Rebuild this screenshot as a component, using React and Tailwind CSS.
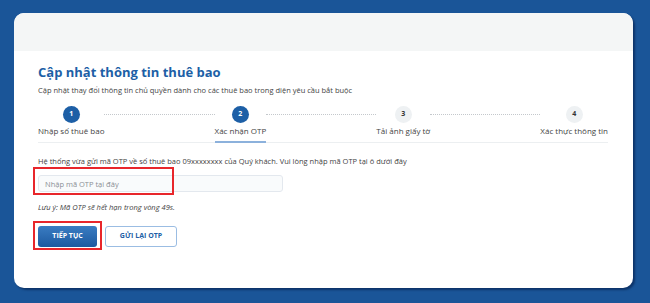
import React from 'react';

const steps = [
  { n: 1, label: 'Nhập số thuê bao', done: true },
  { n: 2, label: 'Xác nhận OTP', done: true, active: true },
  { n: 3, label: 'Tải ảnh giấy tờ' },
  { n: 4, label: 'Xác thực thông tin' },
];

const Step = ({ step }) => (
  <div className="flex flex-col items-center">
    <div
      className={
        step.done
          ? 'w-[17px] h-[17px] rounded-full bg-[#1d5fa6] text-white flex items-center justify-center text-[7px] font-bold'
          : 'w-[17px] h-[17px] rounded-full bg-[#eef1f3] text-[#333] flex items-center justify-center text-[7px] font-bold'
      }
    >
      {step.n}
    </div>
    <div className="mt-[3px] text-[8px] leading-[10px] text-[#444] whitespace-nowrap">{step.label}</div>
    <div className={step.active ? 'mt-[5px] h-[2px] w-full bg-[#8cb1dc]' : 'mt-[5px] h-[2px] w-full'} />
  </div>
);

const App = () => {
  return (
    <div
      className="w-[650px] h-[303px] bg-[#1a5598] pt-[13px] pl-[14px] overflow-hidden"
      style={{ fontFamily: '"Open Sans", "Noto Sans", sans-serif' }}
    >
      <div className="w-[619px] h-[275px] rounded-[10px] bg-white overflow-hidden shadow-[2px_2px_2px_rgba(0,20,60,0.5)]">
        {/* Top bar */}
        <div className="h-[38px] bg-[#f4f6f6]" />

        <div className="pl-[24px] pr-[25px]">
          {/* Title */}
          <h1 className="mt-[12px] text-[13px] leading-[18px] font-bold text-[#1d5fa6]">
            Cập nhật thông tin thuê bao
          </h1>
          <p className="mt-[4px] text-[7.5px] leading-[10px] text-[#444]">
            Cập nhật thay đổi thông tin chủ quyền dành cho các thuê bao trong diện yêu cầu bắt buộc
          </p>

          {/* Steps */}
          <div className="mt-[11px]">
            <div className="flex items-start">
              {steps.map((s, i) => (
                <React.Fragment key={s.n}>
                  <Step step={s} />
                  {i < steps.length - 1 && (
                    <div className="flex-1 mt-[8px] border-t border-dotted border-[#c4c8cc]" />
                  )}
                </React.Fragment>
              ))}
            </div>
            <div className="h-px bg-[#eceff1] -mt-[1px]" />
          </div>

          {/* OTP form */}
          <p className="mt-[13px] text-[7.5px] leading-[10px] text-[#444]">
            Hệ thống vừa gửi mã OTP về số thuê bao 09xxxxxxxx của Quý khách. Vui lòng nhập mã OTP tại ô dưới đây
          </p>

          <div className="relative mt-[9px] w-[245px]">
            <input
              className="block w-[245px] h-[17px] rounded-[3px] border border-[#e3e8ee] bg-[#f9fbfc] px-[6px] text-[7.5px] text-[#444] placeholder:text-[#8a8f95] outline-none"
              placeholder="Nhập mã OTP tại đây"
            />
            <div className="absolute left-[-5px] top-[-8px] w-[141px] h-[28px] border-2 border-[#e8262b]" />
          </div>

          <p className="mt-[10px] text-[7.5px] leading-[10px] italic text-[#444]">
            Lưu ý: Mã OTP sẽ hết hạn trong vòng 49s.
          </p>

          <div className="mt-[14px] flex gap-[8px]">
            <div className="relative">
              <button className="block w-[59px] h-[21px] rounded-[3px] bg-gradient-to-b from-[#3a7cc2] to-[#1c5aa0] text-white text-[7px] font-bold">
                TIẾP TỤC
              </button>
              <div className="absolute left-[-5px] top-[-5px] w-[69px] h-[29px] border-2 border-[#e8262b]" />
            </div>
            <button className="block w-[72px] h-[21px] rounded-[3px] border border-[#9bbde3] bg-white text-[#1d5fa6] text-[7px] font-bold">
              GỬI LẠI OTP
            </button>
          </div>
        </div>
      </div>
    </div>
  );
};

export default App;
